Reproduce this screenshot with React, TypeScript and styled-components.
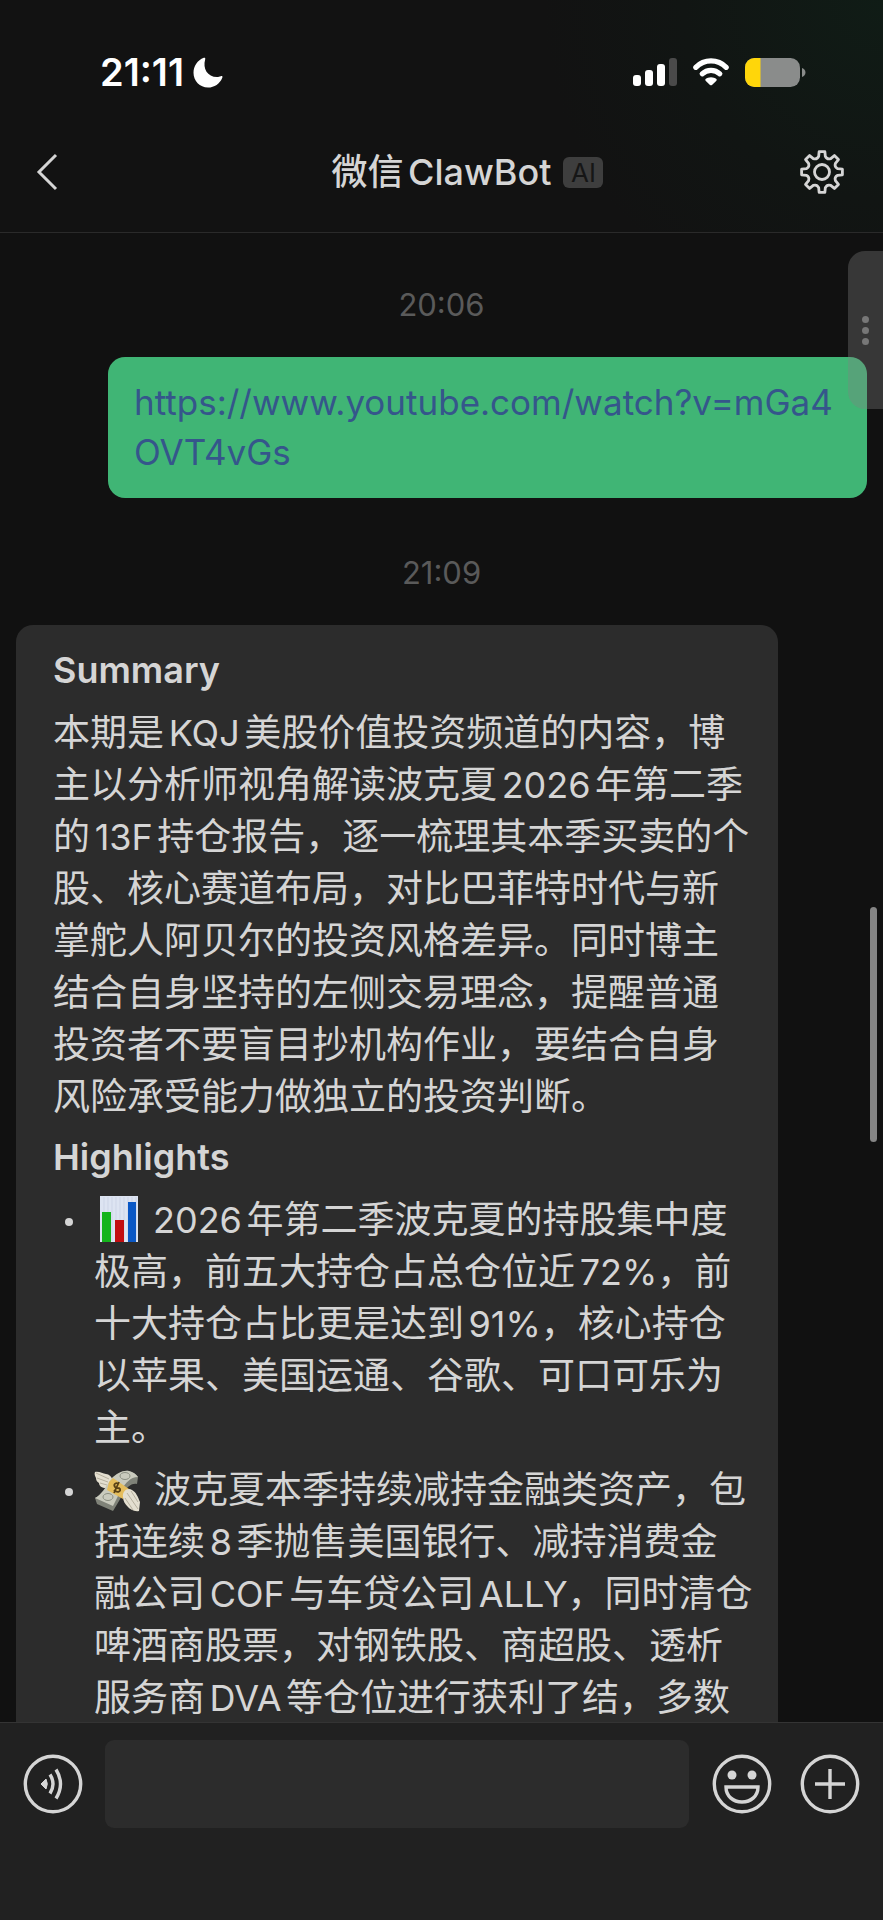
import React from "react";
import styled, { createGlobalStyle } from "styled-components";

const Global = createGlobalStyle`
  * { box-sizing: border-box; }
  html { background: #111; }
  body { margin: 0; background: #111; color: #d5d5d5; font-family: Inter, "Noto Sans CJK SC", sans-serif; font-size: 37px; text-autospace: normal; }
  button { border: 0; padding: 0; background: none; color: inherit; font: inherit; display: flex; cursor: pointer; }
  svg { display: block; flex: none; }
`;

const Screen = styled.div`
  height: 100vh;
  display: flex;
  flex-direction: column;
  overflow: hidden;
`;

const Header = styled.header`
  flex: none;
  border-bottom: 1px solid #2a2a2a;
  background: radial-gradient(circle at 100% 0, #101c16 0, #111513 200px, #121212 340px);
`;

const StatusBar = styled.div`
  display: flex;
  justify-content: space-between;
  align-items: center;
  height: 80px;
  margin-top: 32px;
  padding: 0 77px 0 100px;
  color: #fff;
`;

const StatusGroup = styled.div<{ $gap: number }>`
  display: flex;
  align-items: center;
  gap: ${(p) => p.$gap}px;
`;

const Clock = styled.time`
  font-size: 38px;
  font-weight: 600;
  line-height: 40px;
`;

const NavBar = styled.nav`
  display: grid;
  grid-template-columns: 64px 1fr 64px;
  align-items: center;
  height: 120px;
  padding: 0 38px 0 28px;
`;

const IconButton = styled.button<{ $end?: boolean }>`
  justify-content: ${(p) => (p.$end ? "flex-end" : "flex-start")};
  width: 100%;
`;

const TitleRow = styled.div`
  display: flex;
  justify-content: center;
  align-items: center;
  gap: 12px;
  padding-left: 62px;
`;

const Title = styled.h1`
  margin: 0;
  font-size: 36px;
  font-weight: 500;
  line-height: 48px;
  white-space: nowrap;
`;

const Badge = styled.span`
  display: flex;
  align-items: center;
  justify-content: center;
  width: 40px;
  height: 31px;
  border-radius: 6px;
  background: #3e3e3e;
  color: #161616;
  font-size: 26px;
`;

const Chat = styled.main`
  position: relative;
  flex: 1;
  min-height: 0;
  overflow: hidden;
  padding: 48px 16px 0;
`;

const Stamp = styled.time`
  display: block;
  text-align: center;
  color: #5a5a5a;
  font-size: 31px;
  line-height: 48px;
`;

const Outgoing = styled.div`
  width: fit-content;
  max-width: 759px;
  margin: 28px 0 51px auto;
  padding: 20px 30px 21px 26px;
  border-radius: 17px;
  background: #40b575;
  font-size: 35px;
  line-height: 50px;
`;

const Link = styled.a`
  color: #35568b;
  text-decoration: none;
  word-break: break-all;
`;

const Incoming = styled.article`
  width: 762px;
  max-width: 100%;
  margin-top: 28px;
  padding: 11px 25px 16px 37px;
  border-radius: 17px;
  background: #2c2c2c;
  line-height: 52px;
`;

const Heading = styled.h2`
  margin: 4px 0 7px;
  font-size: 36px;
  font-weight: 600;
  line-height: 60px;
`;

const Paragraph = styled.p`
  margin: 0;
`;

const List = styled.ul`
  margin: 0;
  padding: 0;
  list-style: none;
`;

const Item = styled.li`
  display: grid;
  grid-template-columns: 41px 1fr;
  margin-bottom: 10px;
`;

const Bullet = styled.span`
  width: 8px;
  height: 8px;
  margin: 24px 0 0 12px;
  border-radius: 50%;
  background: #d5d5d5;
`;

const Latin = styled.span`
  font-size: 36px;
`;

const Emoji = styled.span`
  display: inline-block;
  vertical-align: -9px;
  margin-right: 14px;
`;

const SideTab = styled.button`
  position: absolute;
  top: 18px;
  right: 0;
  width: 35px;
  height: 158px;
  flex-direction: column;
  justify-content: center;
  gap: 4px;
  padding-left: 14px;
  border-radius: 17px 0 0 17px;
  background: rgba(130, 130, 130, 0.34);
`;

const Dot = styled.i`
  width: 7px;
  height: 7px;
  border-radius: 50%;
  background: #777;
`;

const ScrollThumb = styled.div`
  position: absolute;
  top: 674px;
  right: 6px;
  width: 7px;
  height: 235px;
  border-radius: 4px;
  background: #858585;
`;

const Composer = styled.footer`
  flex: none;
  display: flex;
  align-items: flex-start;
  height: 198px;
  padding: 17px 23px 0;
  border-top: 1px solid #343434;
  background: #212121;
`;

const Field = styled.input`
  flex: 1;
  min-width: 0;
  height: 88px;
  margin: 0 23px 0 22px;
  padding: 0 20px;
  border: 0;
  border-radius: 9px;
  outline: 0;
  background: #2c2c2c;
  color: #d5d5d5;
  font: inherit;
`;

const RoundButton = styled.button`
  margin-top: 14px;
  & + & { margin-left: 28px; }
`;

const gearPath = (() => {
  const pts: string[] = [];
  const at = (r: number, deg: number) => {
    const a = (deg * Math.PI) / 180;
    return `${(23 + r * Math.cos(a)).toFixed(2)} ${(23 + r * Math.sin(a)).toFixed(2)}`;
  };
  for (let i = 0; i < 8; i++) {
    const c = i * 45 - 90;
    pts.push(`${i ? "L" : "M"}${at(16, c - 12)} L${at(20.6, c - 8)} L${at(20.6, c + 8)} L${at(16, c + 12)}`);
    pts.push(`Q${at(13.2, c + 22.5)} ${at(16, c + 33)}`);
  }
  return pts.join(" ") + "Z";
})();

const Gear = () => (
  <svg width="46" height="46" viewBox="0 0 46 46" fill="none" stroke="#d5d5d5" strokeWidth="2.8" strokeLinejoin="round">
    <path d={gearPath} />
    <circle cx="23" cy="23" r="7.500" />
  </svg>
);

const Moon = () => (
  <svg width="30" height="31" viewBox="0 0 30 31" fill="#fff">
    <path d="M10.8 .8C11.8 .3 12.6 1 12.2 2.2C9.5 11.5 14.5 20 24 20C25.500 20 26.500 19.700 27.800 19.200C29.200 18.700 29.800 19.500 29.300 20.700C26.800 26.700 21.500 30.500 15 30.500C6.800 30.500 .5 24 .5 15.800C.5 9 4.400 3.300 10.800 .8Z" />
  </svg>
);

const Signal = () => (
  <svg width="44" height="28" viewBox="0 0 44 28" fill="#fff">
    <rect x="0" y="17" width="8" height="11" rx="3" />
    <rect x="12" y="12" width="8" height="16" rx="3" />
    <rect x="24" y="6" width="8" height="22" rx="3" />
    <rect x="36" y="0" width="8" height="28" rx="3" fill="#4a4a4a" />
  </svg>
);

const Wifi = () => (
  <svg width="36" height="28" viewBox="0 0 36 28" fill="none" stroke="#fff" strokeWidth="5.200" strokeLinecap="round">
    <path d="M2.800 9.300C11.200.8 24.800.8 33.200 9.300" />
    <path d="M9.200 15.800C14.100 11.100 21.900 11.100 26.800 15.800" />
    <path d="M18 19.200C20.200 19.200 22 19.900 23.400 21.100C23.900 21.600 23.900 22.200 23.400 22.700L19 26.900C18.400 27.500 17.600 27.500 17 26.900L12.600 22.700C12.100 22.200 12.100 21.600 12.600 21.100C14 19.900 15.800 19.200 18 19.200Z" fill="#fff" stroke="none" />
  </svg>
);

const Battery = () => (
  <svg width="61" height="29" viewBox="0 0 61 29">
    <clipPath id="cell"><rect width="55" height="29" rx="9.500" /></clipPath>
    <g clipPath="url(#cell)">
      <rect width="55" height="29" fill="#8a8c8b" />
      <rect width="15.500" height="29" fill="#ffd60a" />
    </g>
    <path d="M57 10C61.600 11.500 61.600 17.500 57 19Z" fill="#8a8c8b" />
  </svg>
);

const BarChart = () => (
  <svg width="45" height="46" viewBox="0 0 45 46" role="img" aria-label="📊">
    <rect x="6" width="38" height="46" fill="#dde4f2" />
    <path d="M10 1V45M14 1V45M18 1V45M22 1V45M26 1V45M30 1V45M34 1V45M38 1V45M42 1V45" stroke="#c6d0e4" strokeWidth=".7" />
    <rect x="8" y="16" width="9" height="30" fill="#14b41c" />
    <rect x="21" y="24" width="9" height="22" fill="#c20d10" />
    <rect x="34" y="6" width="8" height="40" fill="#0a58c6" />
  </svg>
);

const FlyingMoney = () => (
  <svg width="46" height="42" viewBox="0 0 46 42" role="img" aria-label="💸">
    <path d="M1 2C5 1 9 4 12 4C15 4 18 7 19 11L12 18C8 18 5 16 5 13C3 12 2 10 2 8C1 6 0 4 1 2Z" fill="#e4dfd0" />
    <path d="M2 3L15 9M3 8L14 12M6 13L13 15" stroke="#a9a392" strokeWidth=".8" />
    <path d="M17 10C23 4 28 0 35 1C39 2 42 4 44 7L43 14C38 13 34 16 30 22L25 31L19 41L3 34L1 28C7 25 12 18 17 10Z" fill="#7f8278" />
    <path d="M17 9C23 3 29 0 35 1C39 2 42 4 44 7C36 7 32 13 27 20L19 36L1 28C7 25 12 17 17 9Z" fill="#c9cabd" />
    <ellipse cx="31" cy="6" rx="5" ry="3.500" fill="none" stroke="#8b8f82" />
    <ellipse cx="14" cy="27" rx="5" ry="3.500" fill="none" stroke="#8b8f82" />
    <path d="M15 12L19 8L35 19L29 29L13 20Z" fill="#e5bd5c" />
    <path d="M25 14C22 12 19 14 21 17C22 19 25 17 26 19C27 22 23 23 20 20M25 12L20 23" fill="none" stroke="#584015" strokeWidth="1.800" />
    <path d="M29 27C28 21 34 17 38 20C42 22 44 27 46 32L45 41C40 42 36 39 34 37C31 34 29 31 29 27Z" fill="#e4dfd0" />
    <path d="M33 23L44 39M37 21L44 32M31 28L39 40" stroke="#a9a392" strokeWidth=".8" />
  </svg>
);

const Ring = ({ children }: { children: React.ReactNode }) => (
  <svg width="60" height="60" viewBox="0 0 60 60" fill="none" stroke="#d5d5d5" strokeWidth="3.400">
    <circle cx="30" cy="30" r="27.700" />
    {children}
  </svg>
);

export default function App() {
  return (
    <Screen>
      <Global />
      <Header>
        <StatusBar>
          <StatusGroup $gap={9}>
            <Clock>21:11</Clock>
            <Moon />
          </StatusGroup>
          <StatusGroup $gap={16}>
            <Signal />
            <Wifi />
            <Battery />
          </StatusGroup>
        </StatusBar>
        <NavBar>
          <IconButton aria-label="返回">
            <svg width="32" height="40" viewBox="0 0 32 40" fill="none" stroke="#d5d5d5" strokeWidth="3">
              <path d="M28 3L11 20L28 37" />
            </svg>
          </IconButton>
          <TitleRow>
            <Title>微信ClawBot</Title>
            <Badge>AI</Badge>
          </TitleRow>
          <IconButton $end aria-label="设置">
            <Gear />
          </IconButton>
        </NavBar>
      </Header>
      <Chat>
        <Stamp>20:06</Stamp>
        <Outgoing>
          <Link href="https://www.youtube.com/watch?v=mGa4OVT4vGs">https://www.youtube.com/watch?v=mGa4OVT4vGs</Link>
        </Outgoing>
        <Stamp>21:09</Stamp>
        <Incoming>
          <Heading>Summary</Heading>
          <Paragraph>
            本期是<Latin>KQJ</Latin>美股价值投资频道的内容，博主以分析师视角解读波克夏<Latin>2026</Latin>年第二季的<Latin>13F</Latin>持仓报告，逐一梳理其本季买卖的个股、核心赛道布局，对比巴菲特时代与新掌舵人阿贝尔的投资风格差异。同时博主结合自身坚持的左侧交易理念，提醒普通投资者不要盲目抄机构作业，要结合自身风险承受能力做独立的投资判断。
          </Paragraph>
          <Heading>Highlights</Heading>
          <List>
            <Item>
              <Bullet />
              <Paragraph>
                <Emoji><BarChart /></Emoji><Latin>2026</Latin>年第二季波克夏的持股集中度极高，前五大持仓占总仓位近<Latin>72%</Latin>，前十大持仓占比更是达到<Latin>91%</Latin>，核心持仓以苹果、美国运通、谷歌、可口可乐为主。
              </Paragraph>
            </Item>
            <Item>
              <Bullet />
              <Paragraph>
                <Emoji><FlyingMoney /></Emoji>波克夏本季持续减持金融类资产，包括连续<Latin>8</Latin>季抛售美国银行、减持消费金融公司<Latin>COF</Latin>与车贷公司<Latin>ALLY</Latin>，同时清仓啤酒商股票，对钢铁股、商超股、透析服务商<Latin>DVA</Latin>等仓位进行获利了结，多数
              </Paragraph>
            </Item>
          </List>
        </Incoming>
        <SideTab aria-label="更多">
          <Dot />
          <Dot />
          <Dot />
        </SideTab>
        <ScrollThumb />
      </Chat>
      <Composer>
        <RoundButton aria-label="语音">
          <Ring>
            <path d="M18 30L23 25Q25.500 30 23 35Z" fill="#d5d5d5" strokeWidth="1" />
            <path d="M27 20.500Q33 30 27 39.500M33 15.500Q42 30 33 44.500" />
          </Ring>
        </RoundButton>
        <Field type="text" aria-label="消息" />
        <RoundButton aria-label="表情">
          <Ring>
            <circle cx="20" cy="21" r="4.500" fill="#d5d5d5" stroke="none" />
            <circle cx="40" cy="21" r="4.500" fill="#d5d5d5" stroke="none" />
            <path d="M14 33H46C46 42 39 48 30 48S14 42 14 33Z" />
          </Ring>
        </RoundButton>
        <RoundButton aria-label="更多功能">
          <Ring>
            <path d="M30 15V45M15 30H45" />
          </Ring>
        </RoundButton>
      </Composer>
    </Screen>
  );
}
